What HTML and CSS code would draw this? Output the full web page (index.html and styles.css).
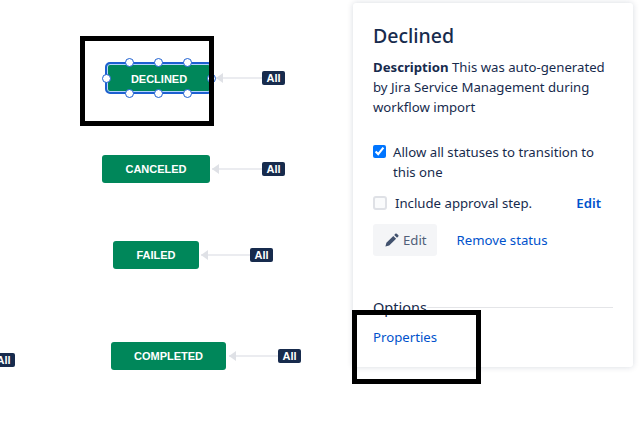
FILE: index.html
```html
<!DOCTYPE html>
<html lang="en">

<head>
    <meta charset="UTF-8">
    <meta name="viewport" content="width=device-width, initial-scale=1.0">
    <title>Workflow diagram</title>
    <link rel="stylesheet" href="styles.css">
</head>

<body>
    <main class="canvas">
        <div class="status-row row-declined">
            <div class="status status-selected">
                DECLINED
                <span class="handle h-top-1"></span>
                <span class="handle h-top-2"></span>
                <span class="handle h-top-3"></span>
                <span class="handle h-bottom-1"></span>
                <span class="handle h-bottom-2"></span>
                <span class="handle h-bottom-3"></span>
                <span class="handle h-left"></span>
                <span class="handle h-right"></span>
            </div>
            <div class="arrow"></div>
            <span class="badge">All</span>
        </div>

        <div class="status-row row-canceled">
            <div class="status">CANCELED</div>
            <div class="arrow"></div>
            <span class="badge">All</span>
        </div>

        <div class="status-row row-failed">
            <div class="status">FAILED</div>
            <div class="arrow"></div>
            <span class="badge">All</span>
        </div>

        <div class="status-row row-completed">
            <div class="status">COMPLETED</div>
            <div class="arrow"></div>
            <span class="badge">All</span>
        </div>

        <span class="badge badge-clipped">All</span>

        <aside class="panel">
            <h2>Declined</h2>
            <p class="description"><strong>Description</strong> This was auto-generated by Jira Service Management during workflow import</p>

            <label class="check-row">
                <input type="checkbox" checked>
                <span>Allow all statuses to transition to this one</span>
            </label>

            <div class="approval-row">
                <span class="fake-check"></span>
                <span class="approval-label">Include approval step.</span>
                <a href="#" class="edit-link">Edit</a>
            </div>

            <div class="actions">
                <button class="edit-btn">
                    <svg width="14" height="14" viewBox="0 0 14 14">
                        <path d="M10.6 0.6 Q11.2 0.2 11.8 0.7 L13.4 2.3 Q13.8 2.9 13.3 3.5 L12 4.8 L9.2 2 Z M8.3 2.9 L11.1 5.7 L4.2 12.6 L0.4 13.6 L1.4 9.8 Z" fill="#42526e"/>
                    </svg>
                    Edit
                </button>
                <a href="#" class="remove-link">Remove status</a>
            </div>

            <div class="options-head">
                <h3>Options</h3>
            </div>
            <a href="#" class="properties-link">Properties</a>
        </aside>

        <div class="annotation annotation-node"></div>
        <div class="annotation annotation-props"></div>
    </main>
</body>

</html>
```

FILE: styles.css
```css
body {
    margin: 0;
    background: white;
    font-family: "Noto Sans", Arial, sans-serif;
    color: #172b4d;
    overflow: hidden;
}

.canvas {
    position: relative;
    width: 640px;
    height: 433px;
    overflow: hidden;
}

/* diagram nodes */
.status-row {
    position: absolute;
    display: flex;
    align-items: center;
}

.row-declined {
    left: 105px;
    top: 62px;
}

.row-canceled {
    left: 102px;
    top: 155px;
}

.row-failed {
    left: 113px;
    top: 241px;
}

.row-completed {
    left: 111px;
    top: 342px;
}

.status {
    position: relative;
    height: 28px;
    box-sizing: border-box;
    display: flex;
    align-items: center;
    justify-content: center;
    background: #00875a;
    border-radius: 3px;
    color: white;
    font-family: "Liberation Sans", Arial, sans-serif;
    font-size: 11px;
    font-weight: bold;
}

.row-declined .status {
    width: 108px;
    height: 32px;
    padding-top: 1px;
    border: 2px solid #1d5fd1;
    box-shadow: inset 0 0 0 1px #b3d4ff;
    border-radius: 5px;
}

.row-canceled .status {
    width: 108px;
}

.row-failed .status {
    width: 86px;
}

.row-completed .status {
    width: 115px;
}

.handle {
    position: absolute;
    width: 7px;
    height: 7px;
    background: white;
    border: 1px solid #1d5fd1;
    border-radius: 50%;
}

.h-top-1, .h-top-2, .h-top-3 {
    top: -6px;
}

.h-bottom-1, .h-bottom-2, .h-bottom-3 {
    bottom: -6px;
}

.h-top-1, .h-bottom-1 {
    left: 18px;
}

.h-top-2, .h-bottom-2 {
    left: 47px;
}

.h-top-3, .h-bottom-3 {
    left: 76px;
}

.h-left {
    left: -5px;
    top: 10px;
}

.h-right {
    right: -5px;
    top: 10px;
}

.arrow {
    position: relative;
    height: 2px;
    background: #ebecf0;
    margin-left: 2px;
    flex: none;
}

.arrow::before {
    content: "";
    position: absolute;
    left: 0;
    top: -4px;
    border-top: 5px solid transparent;
    border-bottom: 5px solid transparent;
    border-right: 7px solid #dfe1e6;
}

.row-declined .arrow {
    width: 46px;
    margin-left: 3px;
}

.row-canceled .arrow {
    width: 50px;
}

.row-failed .arrow {
    width: 49px;
}

.row-completed .arrow {
    width: 49px;
    margin-left: 3px;
}

.badge {
    display: flex;
    align-items: center;
    justify-content: center;
    width: 23px;
    height: 14px;
    background: #172b4d;
    border-radius: 2px;
    color: white;
    font-family: "Liberation Sans", Arial, sans-serif;
    font-size: 11px;
    font-weight: bold;
}

.badge-clipped {
    position: absolute;
    left: -8px;
    top: 353px;
}

/* side panel */
.panel {
    position: absolute;
    left: 353px;
    top: 3px;
    width: 280px;
    height: 364px;
    box-sizing: border-box;
    padding: 20px 20px 0;
    background: white;
    border-radius: 3px;
    box-shadow: 0 0 6px rgba(9, 30, 66, 0.16);
    font-size: 13.2px;
    line-height: 20px;
}

h2 {
    margin: 0;
    font-size: 19.5px;
    font-weight: 500;
    line-height: 26px;
}

.description {
    margin: 8px 0 0;
}

.check-row {
    display: flex;
    margin-top: 25px;
}

.check-row input {
    flex: none;
    width: 13px;
    height: 13px;
    margin: 3px 7px 0 0;
}

.approval-row {
    display: flex;
    align-items: center;
    margin-top: 11px;
}

.fake-check {
    flex: none;
    width: 10px;
    height: 10px;
    background: #fafbfc;
    border: 2px solid #dfe1e6;
    border-radius: 3px;
    margin-right: 8px;
}

.edit-link {
    margin-left: auto;
    margin-right: 12px;
    font-weight: 600;
}

a {
    color: #0052cc;
    text-decoration: none;
}

.actions {
    display: flex;
    align-items: center;
    margin-top: 11px;
}

.edit-btn {
    display: flex;
    align-items: center;
    gap: 4px;
    height: 32px;
    padding: 0 10px 0 12px;
    background: #f4f5f7;
    border: none;
    border-radius: 3px;
    color: #505f79;
    font-family: inherit;
    font-size: 13.2px;
}

.remove-link {
    margin-left: 20px;
}

.options-head {
    margin-top: 41px;
    display: flex;
    align-items: center;
}

.options-head::after {
    content: "";
    flex: 1;
    height: 1px;
    background: #e4e5e8;
    margin-top: 1px;
}

h3 {
    margin: 0;
    font-size: 14.5px;
    font-weight: 400;
    line-height: 20px;
}

.properties-link {
    display: block;
    margin-top: 10px;
}

/* black boxes drawn over the screenshot */
.annotation {
    position: absolute;
    box-sizing: border-box;
    border: 5px solid black;
}

.annotation-node {
    left: 80px;
    top: 36px;
    width: 134px;
    height: 90px;
}

.annotation-props {
    left: 352px;
    top: 310px;
    width: 129px;
    height: 74px;
}
```
